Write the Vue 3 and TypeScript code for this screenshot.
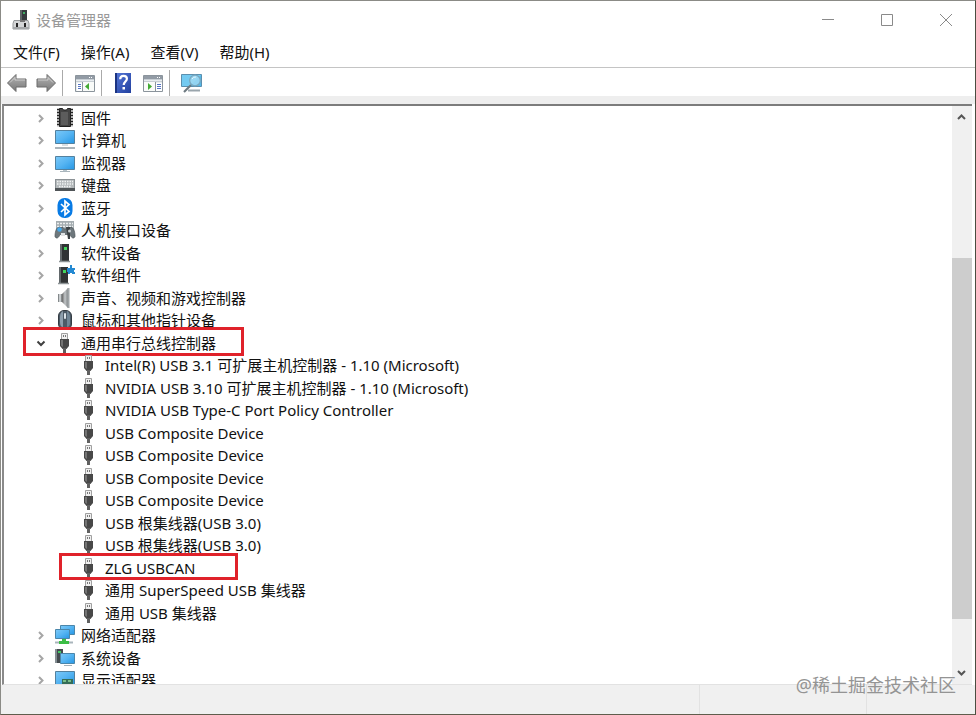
<script setup lang="ts">
type IconName =
  | 'chip' | 'computer' | 'monitor' | 'keyboard' | 'bluetooth' | 'hid' | 'software'
  | 'component' | 'speaker' | 'mouse' | 'usb' | 'network' | 'system' | 'display'

interface DeviceRow {
  label: string
  icon: IconName
  level: 1 | 2
  open?: boolean
  marked?: boolean
}

const menus: string[] = ['文件(F)', '操作(A)', '查看(V)', '帮助(H)']

const rows: DeviceRow[] = [
  { label: '固件', icon: 'chip', level: 1 },
  { label: '计算机', icon: 'computer', level: 1 },
  { label: '监视器', icon: 'monitor', level: 1 },
  { label: '键盘', icon: 'keyboard', level: 1 },
  { label: '蓝牙', icon: 'bluetooth', level: 1 },
  { label: '人机接口设备', icon: 'hid', level: 1 },
  { label: '软件设备', icon: 'software', level: 1 },
  { label: '软件组件', icon: 'component', level: 1 },
  { label: '声音、视频和游戏控制器', icon: 'speaker', level: 1 },
  { label: '鼠标和其他指针设备', icon: 'mouse', level: 1 },
  { label: '通用串行总线控制器', icon: 'usb', level: 1, open: true, marked: true },
  { label: 'Intel(R) USB 3.1 可扩展主机控制器 - 1.10 (Microsoft)', icon: 'usb', level: 2 },
  { label: 'NVIDIA USB 3.10 可扩展主机控制器 - 1.10 (Microsoft)', icon: 'usb', level: 2 },
  { label: 'NVIDIA USB Type-C Port Policy Controller', icon: 'usb', level: 2 },
  { label: 'USB Composite Device', icon: 'usb', level: 2 },
  { label: 'USB Composite Device', icon: 'usb', level: 2 },
  { label: 'USB Composite Device', icon: 'usb', level: 2 },
  { label: 'USB Composite Device', icon: 'usb', level: 2 },
  { label: 'USB 根集线器(USB 3.0)', icon: 'usb', level: 2 },
  { label: 'USB 根集线器(USB 3.0)', icon: 'usb', level: 2 },
  { label: 'ZLG USBCAN', icon: 'usb', level: 2, marked: true },
  { label: '通用 SuperSpeed USB 集线器', icon: 'usb', level: 2 },
  { label: '通用 USB 集线器', icon: 'usb', level: 2 },
  { label: '网络适配器', icon: 'network', level: 1 },
  { label: '系统设备', icon: 'system', level: 1 },
  { label: '显示适配器', icon: 'display', level: 1 },
]
</script>

<template>
  <div class="window">
    <svg class="defs" aria-hidden="true">
      <defs>
        <linearGradient id="screen" x1="0" y1="0" x2="1" y2="1">
          <stop offset="0" stop-color="#7cc9f8" /><stop offset="0.5" stop-color="#55b4f2" /><stop offset="1" stop-color="#2596e4" />
        </linearGradient>
        <linearGradient id="arrow" x1="0" y1="0" x2="0" y2="1">
          <stop offset="0" stop-color="#b5b5b5" /><stop offset="1" stop-color="#777" />
        </linearGradient>
        <linearGradient id="metal" x1="0" y1="0" x2="1" y2="0">
          <stop offset="0" stop-color="#666" /><stop offset="0.5" stop-color="#c4c8ca" /><stop offset="1" stop-color="#7d8183" />
        </linearGradient>
        <linearGradient id="book" x1="0" y1="0" x2="1" y2="1">
          <stop offset="0" stop-color="#5577d8" /><stop offset="1" stop-color="#213f9e" />
        </linearGradient>
      </defs>
    </svg>

    <header class="titlebar">
      <svg class="app-icon" viewBox="0 0 18 20" aria-hidden="true">
        <path d="M8 0h7v11H8z" fill="#343a3d" /><path d="M8 0h2v11H8z" fill="#5d6466" />
        <path d="M11 2h2v2h-2z" fill="#3fae62" />
        <path d="M2 10.500h14l1 3v5.500H1v-5.500z" fill="#d4d6d7" stroke="#96999b" />
        <path d="M1 17h16v2H1z" fill="#a5a8aa" />
        <path d="M4 13h2v4H4zM12 13h2v4h-2z" fill="#222" /><path d="M8 10h5v2H8z" fill="#777" />
      </svg>
      <h1>设备管理器</h1>
      <div class="caption">
        <button type="button" aria-label="最小化"><svg viewBox="0 0 12 12"><path d="M0 5.5h12" /></svg></button>
        <button type="button" aria-label="最大化"><svg viewBox="0 0 12 12"><path d="M.5.5h11v11H.5z" /></svg></button>
        <button type="button" aria-label="关闭"><svg viewBox="0 0 12 12"><path d="M0 0l12 12M12 0L0 12" /></svg></button>
      </div>
    </header>

    <nav class="menubar">
      <button v-for="m in menus" :key="m" type="button">{{ m }}</button>
    </nav>

    <div class="toolbar" role="toolbar">
      <button type="button" aria-label="后退">
        <svg viewBox="0 0 22 20"><path d="M1.500 10L10 1.500V6h10v8H10v4.500z" fill="url(#arrow)" stroke="#6c6c6c" stroke-linejoin="round" /><path d="M4 9.500L9 4.500V7h10" fill="none" stroke="#ccc" /></svg>
      </button>
      <button type="button" aria-label="前进">
        <svg viewBox="0 0 22 20"><path d="M20.500 10L12 1.500V6H2v8h10v4.500z" fill="url(#arrow)" stroke="#6c6c6c" stroke-linejoin="round" /><path d="M3 7h10V4.500l5 5" fill="none" stroke="#ccc" /></svg>
      </button>
      <span class="divider"></span>
      <button type="button" aria-label="显示控制台树">
        <svg viewBox="0 0 22 20">
          <path d="M1.500 2.500h19v16h-19z" fill="#e9edf0" stroke="#8b949c" /><path d="M2 3h18v3H2z" fill="#929ba5" />
          <path d="M15 4h1v1h-1zM17 4h1v1h-1z" fill="#fff" /><path d="M2 6.500h18M2 8.500h18" stroke="#c7ced4" />
          <path d="M3 10h5v8H3z" fill="#fff" /><path d="M4 11.500h3M4 13.500h3M4 15.500h3" stroke="#5574c4" />
          <path d="M8.500 9v9" stroke="#8b949c" /><path d="M9 9h11v9H9z" fill="#f9fbf9" /><path d="M15 10v7l-4-3.500z" fill="#43ab34" />
        </svg>
      </button>
      <span class="divider"></span>
      <button type="button" aria-label="帮助">
        <svg viewBox="0 0 22 20">
          <path d="M2 0h16v20H2z" fill="url(#book)" /><path d="M2 0h2v20H2z" fill="#1c3482" />
          <path d="M7.200 6.200C7.200 3.800 8.700 2.800 10.500 2.800s3.400 1 3.400 3c0 2.600-3.200 3-3.200 6.200" fill="none" stroke="#fff" stroke-width="2.200" /><path d="M9.500 14h2.500v2.500h-2.500z" fill="#fff" />
        </svg>
      </button>
      <button type="button" aria-label="显示操作窗格">
        <svg viewBox="0 0 22 20">
          <path d="M1.500 2.500h19v16h-19z" fill="#e9edf0" stroke="#8b949c" /><path d="M2 3h18v3H2z" fill="#929ba5" />
          <path d="M15 4h1v1h-1zM17 4h1v1h-1z" fill="#fff" /><path d="M2 6.500h18M2 8.500h18" stroke="#c7ced4" />
          <path d="M2 9h11v9H2z" fill="#f9fbf9" /><path d="M13.500 9v9" stroke="#8b949c" />
          <path d="M14 10h6v8h-6z" fill="#fff" /><path d="M15 11.500h4M15 13.500h4M15 15.500h4" stroke="#5574c4" /><path d="M6 10v7l4-3.500z" fill="#43ab34" />
        </svg>
      </button>
      <span class="divider"></span>
      <button type="button" aria-label="扫描检测硬件改动">
        <svg viewBox="0 0 22 20">
          <path d="M.5 1.500h20v12H.5z" fill="#51b9ea" stroke="#5c8fae" /><path d="M1 2h19L9 13H1z" fill="#73caf1" />
          <path d="M7 17.500h12" stroke="#9aa5ac" stroke-width="2" /><path d="M3 19l7-7" stroke="#6d7980" stroke-width="2.200" />
          <circle cx="14" cy="7.500" r="5.300" fill="#a3d9f2" fill-opacity=".8" stroke="#79a6bd" stroke-width="1.200" /><path d="M11 6a4 4 0 0 1 4-2" fill="none" stroke="#e6f6fd" />
        </svg>
      </button>
    </div>

    <main class="content">
      <ul class="tree" role="tree">
        <li
          v-for="(row, i) in rows"
          :key="i"
          class="row"
          :class="{ child: row.level === 2, marked: row.marked }"
          role="treeitem"
          :aria-level="row.level"
          :aria-expanded="row.level === 1 ? !!row.open : undefined"
        >
          <svg v-if="row.level === 1" class="chevron" :class="{ open: row.open }" viewBox="0 0 10 10" aria-hidden="true">
            <path v-if="row.open" d="M1.500 3.500L5 7L8.500 3.500" />
            <path v-else d="M3 2L6.500 5.500L3 9" />
          </svg>
          <svg class="icon" viewBox="0 0 22 22" aria-hidden="true">
            <template v-if="row.icon === 'chip'">
              <path d="M3 2h4v18H3zM15 2h4v18h-4z" fill="#ddd" />
              <path d="M3 2.500h4M3 5.500h4M3 8.500h4M3 11.500h4M3 14.500h4M3 17.500h4M15 2.500h4M15 5.500h4M15 8.500h4M15 11.500h4M15 14.500h4M15 17.500h4" stroke="#222" stroke-width="1.600" />
              <path d="M5.500 1.500h3l1 1.500h3l1-1.500h3v18h-11z" fill="#444" stroke="#222" /><path d="M7 5h7v13H7z" fill="#5c5c5c" />
            </template>
            <template v-else-if="row.icon === 'computer'">
              <path d="M1.500 1.500h19v13h-19z" fill="url(#screen)" stroke="#53819f" /><path d="M8 16h6" stroke="#b4c0c7" /><path d="M1 19h20" stroke="#aab4ba" stroke-width="2" />
            </template>
            <template v-else-if="row.icon === 'monitor'">
              <path d="M1.500 4.500h19v13h-19z" fill="url(#screen)" stroke="#53819f" /><path d="M9 18h4v1H9z" fill="#b9c6cd" /><path d="M6 19.500h10" stroke="#a9b5bc" />
            </template>
            <template v-else-if="row.icon === 'keyboard'">
              <path d="M1 5h20v12H1z" fill="#8c9296" /><path d="M2 6h18v8H2z" fill="#b5babc" />
              <path d="M3 7.500h16M3 10h16M5 12.500h12" stroke="#f1f3f3" stroke-width="1.400" stroke-dasharray="1.500 1" /><path d="M1 15.500h20" stroke="#505558" stroke-width="3" />
            </template>
            <template v-else-if="row.icon === 'bluetooth'">
              <rect x="3.500" y="1" width="15" height="20" rx="7" fill="#087be5" /><path d="M7 7l8 7.500L11 18V4l4 3.500L7 15" fill="none" stroke="#fff" stroke-width="1.700" />
            </template>
            <template v-else-if="row.icon === 'hid'">
              <path d="M2 2h18v9H2z" fill="#a5adb1" /><path d="M3 4.500h16M3 7.500h16" stroke="#eceff0" stroke-width="1.600" stroke-dasharray="2 1" />
              <path d="M4 8.500h5l2 2 2-2h5c2 1 3 5 3 9-1 2.500-3.500 2-5-2H6c-1.500 4-4 4.500-5 2 0-4 1-8 3-9z" fill="#6d777c" stroke="#4c5357" stroke-width=".7" />
              <path d="M12 8h4v12h-2z" fill="#3b4144" /><circle cx="5.500" cy="10.500" r="2.300" fill="#45a9eb" /><circle cx="15.500" cy="12" r="1.500" fill="#c9d0d3" /><path d="M7 14h4v3H7z" fill="#dfe3e5" />
            </template>
            <template v-else-if="row.icon === 'software'">
              <path d="M6 2h9v17H6z" fill="#303335" /><path d="M6 2h2v17H6z" fill="#62686b" /><path d="M10 5h3v3h-3z" fill="#43d65c" /><path d="M5 19.500h11" stroke="#8e9497" stroke-width="1.500" />
            </template>
            <template v-else-if="row.icon === 'component'">
              <path d="M5 3h9v16H5z" fill="#303335" /><path d="M5 3h2v16H5z" fill="#62686b" /><path d="M9 6h3v3H9z" fill="#43d65c" /><path d="M4 19.500h11" stroke="#8e9497" stroke-width="1.500" />
              <path d="M13 4h3V1h2v3h3v2h-1v2h1v2h-3V9h-2v1h-2V8h-1z" fill="#2489d2" />
            </template>
            <template v-else-if="row.icon === 'speaker'">
              <path d="M4 7h5v8H4z" fill="#84898b" /><path d="M5 7h2v8H5z" fill="#c9cdcf" /><path d="M8 7l6-6v20l-6-6z" fill="url(#metal)" /><path d="M14.500 1v20" stroke="#a0a6a9" stroke-width="2" />
            </template>
            <template v-else-if="row.icon === 'mouse'">
              <rect x="4.500" y="1.500" width="13" height="19" rx="5.500" fill="#4c5a66" stroke="#343b42" /><path d="M6 8c0-3 1-5 3-6v16c-2 0-3-2-3-5z" fill="#8d9eac" /><path d="M13 2c2 1 3 3 3 6v6c0 2-1 4-3 4z" fill="#708595" /><rect x="10" y="4" width="2" height="6" rx="1" fill="#dce4ea" />
            </template>
            <template v-else-if="row.icon === 'usb'">
              <path d="M7.500 1.500h6v6h-6z" fill="#f0f0f0" stroke="#a0a0a0" /><path d="M9 3h1v2H9zM11 3h1v2h-1z" fill="#777" />
              <path d="M6 7h9v7l-2.500 3h-4L6 14z" fill="#484848" /><path d="M7 8h2v7l-2-1.500z" fill="#757575" /><path d="M9 16h3v5H9z" fill="#606060" />
            </template>
            <template v-else-if="row.icon === 'network'">
              <path d="M6.500 1.500h14v9h-14z" fill="url(#screen)" stroke="#4b86aa" /><path d="M1.500 5.500h14v9h-14z" fill="url(#screen)" stroke="#4b86aa" /><path d="M8 15h4v2h3v3H5v-3h3z" fill="#3bbd45" /><path d="M1 18.500h4M15 18.500h4" stroke="#a9b5bc" stroke-width="2" />
            </template>
            <template v-else-if="row.icon === 'system'">
              <path d="M1 2h8v14H1z" fill="#444b4f" /><path d="M1 2h2v14H1z" fill="#858e93" /><path d="M4 4h3v2H4z" fill="#43cb64" /><path d="M6.500 6.500h14v10h-14z" fill="url(#screen)" stroke="#4b86aa" /><path d="M10 18.500h8" stroke="#a4b1b9" />
            </template>
            <template v-else>
              <path d="M1.500 2.500h19v13h-19z" fill="url(#screen)" stroke="#53819f" /><path d="M8 10h11v7H8z" fill="#356d57" /><path d="M9 11h3v2H9zM14 11h3v2h-3z" fill="#78bd87" />
            </template>
          </svg>
          <span>{{ row.label }}</span>
        </li>
      </ul>
      <div class="scrollbar" aria-hidden="true">
        <svg class="scroll-arrow" viewBox="0 0 20 22"><path d="M6 13l3.500-3.500L13 13" /></svg>
        <div class="track"><div class="thumb"></div></div>
        <svg class="scroll-arrow" viewBox="0 0 20 22"><path d="M6 9l3.500 3.500L13 9" /></svg>
      </div>
    </main>

    <footer class="statusbar"><span></span><span></span><span></span></footer>
    <p class="watermark">@稀土掘金技术社区</p>
  </div>
</template>

<style>
body {
  background: #4b4d40;
}
</style>

<style scoped>
.window {
  position: relative;
  box-sizing: border-box;
  display: flex;
  flex-direction: column;
  height: 100vh;
  border: 1px solid #8b8b86;
  border-right-color: #4b4d40;
  border-bottom-color: #5f5d4c;
  background: #fff;
  color: #111;
  font: 15px/22px "Noto Sans", "Noto Sans CJK SC", sans-serif;
}
.defs {
  position: absolute;
  width: 0;
  height: 0;
}
button {
  padding: 0;
  border: 0;
  background: none;
  color: inherit;
  font: inherit;
}
.titlebar {
  display: flex;
  align-items: center;
  height: 37px;
  padding-left: 11px;
  gap: 6px;
}
.app-icon {
  width: 18px;
  height: 20px;
}
h1 {
  flex: 1;
  margin: 0;
  color: #999;
  font-size: 15px;
  font-weight: 400;
}
.caption {
  display: flex;
}
.caption button {
  display: grid;
  place-items: center;
  width: 59px;
  height: 37px;
}
.caption svg {
  width: 12px;
  height: 12px;
  fill: none;
  stroke: #8a8a8a;
}
.menubar {
  display: flex;
  gap: 21px;
  height: 29px;
  padding-left: 12px;
  border-bottom: 1px solid #c4c4c4;
}
.menubar button {
  height: 28px;
  white-space: nowrap;
}
.toolbar {
  display: flex;
  align-items: center;
  gap: 5px;
  height: 27px;
  padding: 1px 0 0 5px;
  border-bottom: 8px solid #eee;
}
.toolbar button,
.toolbar svg {
  display: block;
  width: 22px;
  height: 20px;
}
.toolbar button + button {
  margin-left: 2px;
}
.divider {
  width: 1px;
  height: 26px;
  margin-right: 6px;
  background: #aaa;
}
.content {
  display: flex;
  flex: 1;
  min-height: 0;
  margin: 0 3px 0 1px;
  border-top: 2px solid #7c7c7c;
  border-left: 2px solid #8a8a8a;
  border-bottom: 1px solid #e2e2e2;
}
.tree {
  flex: 1;
  min-width: 0;
  margin: 0;
  padding: 1px 0 0 32px;
  overflow: hidden;
  list-style: none;
}
.row {
  position: relative;
  display: flex;
  align-items: center;
  height: 22px;
  white-space: nowrap;
}
.row:nth-child(even) {
  margin-bottom: 1px;
}
.child {
  padding-left: 42px;
}
.chevron {
  width: 10px;
  height: 10px;
  margin-right: 8px;
  fill: none;
  stroke: #a6a6a6;
  stroke-width: 2;
}
.chevron.open {
  stroke: #404040;
}
.icon {
  width: 22px;
  height: 22px;
  margin-right: 5px;
}
.marked::after {
  content: "";
  position: absolute;
  top: -5px;
  left: -13px;
  width: 215px;
  height: 23px;
  border: 3px solid #e0222a;
}
.child.marked::after {
  top: -4px;
  left: 23px;
  width: 173px;
  height: 21px;
}
.scrollbar {
  display: flex;
  flex-direction: column;
  width: 20px;
  background: #f0f0f0;
}
.scroll-arrow {
  width: 20px;
  height: 22px;
  fill: none;
  stroke: #555;
  stroke-width: 2;
}
.track {
  display: grid;
  flex: 1;
  grid-template-rows: 130fr 361fr 43fr;
}
.thumb {
  grid-row: 2;
  background: #cdcdcd;
}
.statusbar {
  display: grid;
  grid-template-columns: 698fr 167fr 109fr;
  height: 29px;
  background: #f0f0f0;
}
.statusbar span + span {
  border-left: 1px solid #e2e2e2;
}
.watermark {
  position: absolute;
  right: 19px;
  bottom: 17px;
  margin: 0;
  color: #949494;
  font-size: 18px;
  line-height: 24px;
}
</style>
